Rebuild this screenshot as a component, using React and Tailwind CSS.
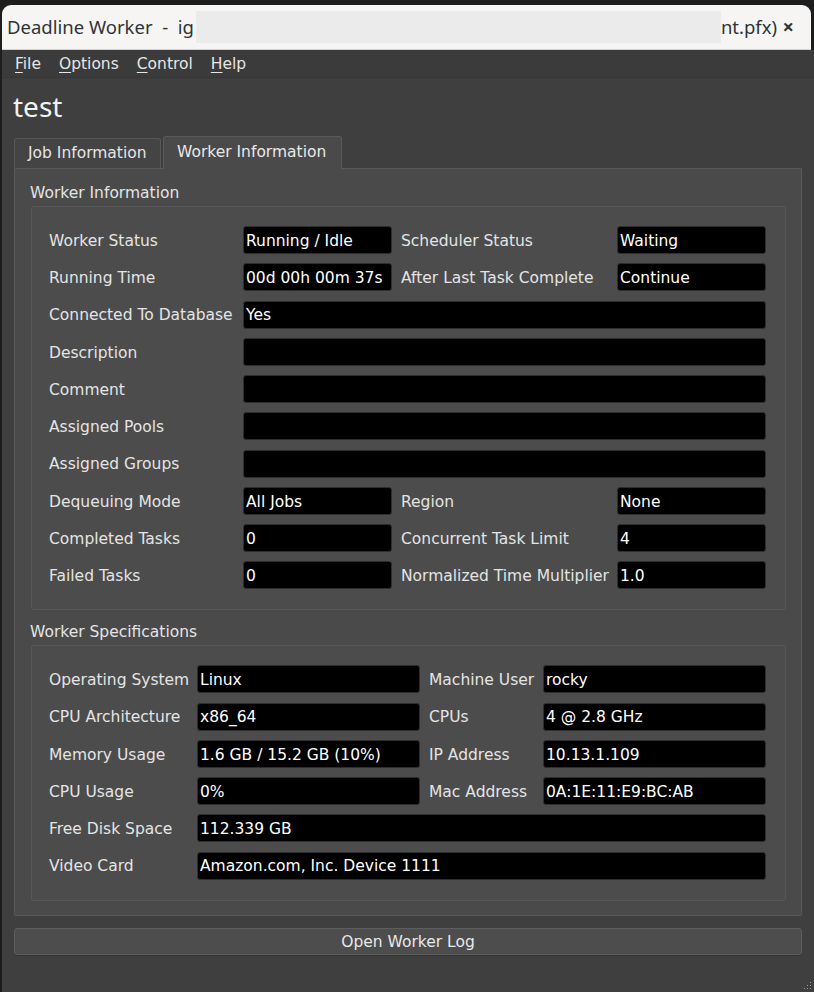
const font = { fontFamily: '"DejaVu Sans", "Noto Sans", sans-serif' }
const titleFont = { fontFamily: '"Noto Sans", "Open Sans", sans-serif' }

function Field({ value, span }) {
  return (
    <div className={`h-[28px] rounded-[3px] bg-black border border-[#2e2e2e] text-white text-[15.5px] pl-[2px] pt-[3px] flex items-center whitespace-nowrap overflow-hidden ${span ? 'col-span-3' : ''}`}>
      {value}
    </div>
  )
}

function Label({ text, second }) {
  return (
    <div className={`h-[28px] pt-[3px] flex items-center text-[15.5px] text-[#e4e4e4] whitespace-nowrap ${second ? 'pl-[9px]' : ''}`}>{text}</div>
  )
}

function Group({ title, cols, rows }) {
  return (
    <div>
      <div className="h-[35px] pl-[15px] pt-[12px] text-[15.5px] text-[#e4e4e4] leading-[20px]">{title}</div>
      <div className="mr-[15px] ml-[16px] border border-[#575757] bg-[#4c4c4c] rounded-[2px] pt-[19px] pb-[20px] pl-[17px]">
        <div className={`grid ${cols} gap-y-[9.25px]`}>
          {rows.map((r, i) =>
            r.length === 2 ? (
              <div key={i} className="contents">
                <Label text={r[0]} />
                <Field value={r[1]} span />
              </div>
            ) : (
              <div key={i} className="contents">
                <Label text={r[0]} />
                <Field value={r[1]} />
                <Label text={r[2]} second />
                <Field value={r[3]} />
              </div>
            )
          )}
        </div>
      </div>
    </div>
  )
}

function Menu({ text }) {
  return (
    <span className="mr-[18px]">
      <span className="underline underline-offset-[3px] decoration-1">{text[0]}</span>
      {text.slice(1)}
    </span>
  )
}

export default function App() {
  const workerRows = [
    ['Worker Status', 'Running / Idle', 'Scheduler Status', 'Waiting'],
    ['Running Time', '00d 00h 00m 37s', 'After Last Task Complete', 'Continue'],
    ['Connected To Database', 'Yes'],
    ['Description', ''],
    ['Comment', ''],
    ['Assigned Pools', ''],
    ['Assigned Groups', ''],
    ['Dequeuing Mode', 'All Jobs', 'Region', 'None'],
    ['Completed Tasks', '0', 'Concurrent Task Limit', '4'],
    ['Failed Tasks', '0', 'Normalized Time Multiplier', '1.0'],
  ]
  const specRows = [
    ['Operating System', 'Linux', 'Machine User', 'rocky'],
    ['CPU Architecture', 'x86_64', 'CPUs', '4 @ 2.8 GHz'],
    ['Memory Usage', '1.6 GB / 15.2 GB (10%)', 'IP Address', '10.13.1.109'],
    ['CPU Usage', '0%', 'Mac Address', '0A:1E:11:E9:BC:AB'],
    ['Free Disk Space', '112.339 GB'],
    ['Video Card', 'Amazon.com, Inc. Device 1111'],
  ]

  return (
    <div className="w-[814px] h-[992px] bg-[#1d1d1d] pt-[5px] pl-[2px] flex flex-col overflow-hidden" style={font}>
      {/* title bar */}
      <div className="h-[45px] shrink-0 mr-[3px] bg-[#f6f5f4] rounded-t-[9px] flex items-center pl-[5px] pr-[17px] text-[18.5px] text-[#2e3436] border-b border-[#cfcfcf]" style={titleFont}>
        <span className="whitespace-pre">Deadline Worker  -  ig</span>
        <div className="h-[32px] w-[525px] bg-[#ebebeb] ml-[2px]"></div>
        <span>nt.pfx)</span>
        <span className="ml-auto text-[20px] font-bold">×</span>
      </div>

      <div className="flex-1 bg-[#3f3f3f] flex flex-col relative">
        {/* menu bar */}
        <div className="h-[28px] pt-[3px] bg-[#3b3b3b] border-b border-[#363636] flex items-center pl-[13px] text-[15.5px] text-[#e6e6e6]">
          <Menu text="File" />
          <Menu text="Options" />
          <Menu text="Control" />
          <Menu text="Help" />
        </div>

        <div className="h-[57px] pl-[11px] pt-[8px] text-[28px] leading-[40px] text-[#f2f2f2]" style={titleFont}>test</div>

        {/* tabs */}
        <div className="flex items-end h-[33px] pl-[12px]">
          <div className="h-[30px] w-[147px] bg-[#444444] border border-[#575757] border-b-0 rounded-t-[3px] flex items-center pl-[13px] pt-[1px] text-[15.5px] text-[#e4e4e4]">Job Information</div>
          <div className="h-[33px] w-[179px] ml-[2px] bg-[#4a4a4a] border border-[#5a5a5a] border-b-0 rounded-t-[3px] flex items-center pl-[13px] text-[15.5px] text-[#e8e8e8] relative z-10 -mb-px">Worker Information</div>
        </div>

        {/* pane */}
        <div className="ml-[12px] mr-[12px] h-[748px] bg-[#4a4a4a] border border-[#5a5a5a] rounded-b-[2px] pt-[2px] flex flex-col">
          <Group title="Worker Information" cols="grid-cols-[194px_149px_225px_149px]" rows={workerRows} />
          <Group title="Worker Specifications" cols="grid-cols-[148px_223px_123px_223px]" rows={specRows} />
        </div>

        <button className="ml-[12px] mr-[12px] mt-[12px] h-[27px] pt-[2px] rounded-[3px] bg-[#4d4d4d] border border-[#5e5e5e] shadow-[0_1px_0_#333] text-[15.5px] text-[#e8e8e8] flex items-center justify-center">
          Open Worker Log
        </button>

        {/* resize grip */}
        <svg className="absolute right-[2px] bottom-[2px]" width="10" height="10" viewBox="0 0 10 10">
          {[[8, 2], [8, 5], [5, 5], [8, 8], [5, 8], [2, 8]].map(([x, y], i) => (
            <rect key={i} x={x} y={y} width="1" height="1" fill="#9a9a9a" />
          ))}
        </svg>
      </div>
    </div>
  )
}
